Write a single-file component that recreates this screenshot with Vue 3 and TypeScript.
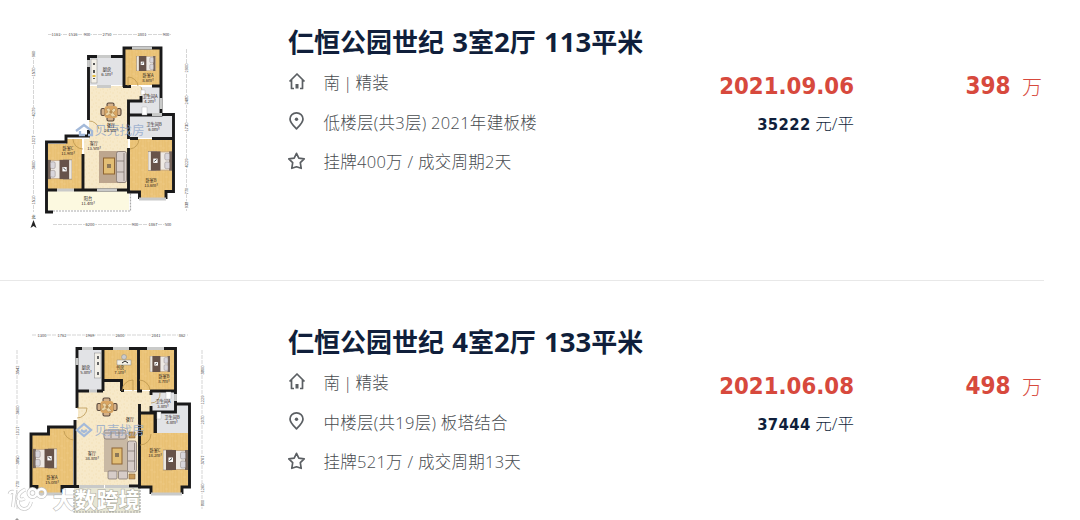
<script setup lang="ts">
interface Listing {
    id: number
    title: string
    facing: string
    floor: string
    deal: string
    date: string
    unitPrice: string
    total: string
}

interface Label {
    x: number
    y: number
    name: string
    area?: string
}

interface Tick {
    at: number
    text: string
}

const listings: Listing[] = [
    {
        id: 1,
        title: '仁恒公园世纪 3室2厅 113平米',
        facing: '南 | 精装',
        floor: '低楼层(共3层) 2021年建板楼',
        deal: '挂牌400万 / 成交周期2天',
        date: '2021.09.06',
        unitPrice: '35222',
        total: '398',
    },
    {
        id: 2,
        title: '仁恒公园世纪 4室2厅 133平米',
        facing: '南 | 精装',
        floor: '中楼层(共19层) 板塔结合',
        deal: '挂牌521万 / 成交周期13天',
        date: '2021.06.08',
        unitPrice: '37444',
        total: '498',
    },
];

// digits are set slightly larger than the Chinese characters around them
function runs(title: string): string[] {
    return title.split(/(\d+)/);
}

const labelsA: Label[] = [
    { x: 107, y: 71, name: '厨房', area: '6.1m²' },
    { x: 148, y: 77, name: '卧室A', area: '8.6m²' },
    { x: 150, y: 98, name: '卫生间A', area: '4.2m²' },
    { x: 154, y: 126, name: '卫生间B', area: '6.0m²' },
    { x: 111, y: 127, name: '餐厅', area: '24.5m²' },
    { x: 94, y: 145, name: '客厅', area: '13.5m²' },
    { x: 68, y: 150, name: '卧室C', area: '11.9m²' },
    { x: 151, y: 182, name: '卧室B', area: '13.6m²' },
    { x: 88, y: 200, name: '阳台', area: '11.4m²' },
];
const labelsB: Label[] = [
    { x: 86, y: 369, name: '厨房', area: '5.8m²' },
    { x: 120, y: 369, name: '书房', area: '7.1m²' },
    { x: 164, y: 378, name: '卧室B', area: '8.7m²' },
    { x: 163, y: 403, name: '卫生间A', area: '3.8m²' },
    { x: 172, y: 419, name: '卫生间B', area: '4.8m²' },
    { x: 130, y: 421, name: '餐厅' },
    { x: 92, y: 455, name: '客厅', area: '38.8m²' },
    { x: 52, y: 479, name: '卧室A', area: '15.0m²' },
    { x: 155, y: 452, name: '卧室C', area: '18.2m²' },
    { x: 107, y: 497, name: '阳台', area: '8.6m²' },
];

const topA: Tick[] = [
    { at: 56, text: '1163' }, { at: 73, text: '1536' }, { at: 87, text: '900' },
    { at: 107, text: '2750' }, { at: 142, text: '3801' }, { at: 166, text: '900' },
];
const bottomA: Tick[] = [
    { at: 90, text: '6200' }, { at: 135, text: '900' }, { at: 153, text: '1867' }, { at: 168, text: '500' },
];
const leftA: Tick[] = [
    { at: 54, text: '960' }, { at: 72, text: '1570' }, { at: 112, text: '4279' },
    { at: 140, text: '1027' }, { at: 165, text: '3600' }, { at: 200, text: '1510' },
];
const rightA: Tick[] = [
    { at: 68, text: '2900' }, { at: 100, text: '2480' }, { at: 127, text: '1730' },
    { at: 163, text: '4229' }, { at: 191, text: '770' }, { at: 205, text: '938' },
];
const topB: Tick[] = [
    { at: 42, text: '1300' }, { at: 62, text: '1762' }, { at: 90, text: '1969' },
    { at: 120, text: '2600' }, { at: 156, text: '2841' }, { at: 182, text: '862' },
];
const leftB: Tick[] = [
    { at: 370, text: '3542' }, { at: 410, text: '3600' }, { at: 431, text: '1017' },
    { at: 460, text: '3850' }, { at: 484, text: '770' },
];
const rightB: Tick[] = [
    { at: 370, text: '3800' }, { at: 400, text: '1229' }, { at: 420, text: '2070' },
    { at: 460, text: '3767' }, { at: 488, text: '1260' }, { at: 503, text: '800' },
];
</script>

<template>
    <svg class="defs" width="0" height="0" aria-hidden="true">
        <defs>
            <pattern id="wood" width="9" height="12" patternUnits="userSpaceOnUse">
                <rect width="9" height="12" fill="#ebc47a" />
                <path d="M0 0V12M3 0V12M6 0V12" stroke="#e5b965" stroke-width=".5" />
                <path d="M0 4H3M3 9H6M6 2H9" stroke="#f0cd88" stroke-width=".6" />
            </pattern>
            <pattern id="stone" width="7" height="7" patternUnits="userSpaceOnUse">
                <rect width="7" height="7" fill="#f7e9c9" />
                <path d="M0 2h2M4 5h2M5 1h1M2 6h1" stroke="#f4e2ba" />
            </pattern>
            <symbol id="bed" viewBox="0 0 25 20">
                <rect width="25" height="20" fill="#c9ab83" />
                <rect x="1" y="1" width="24" height="18" fill="#eee9e4" />
                <rect x="22" y="0" width="3" height="20" fill="#77665c" />
                <rect x="17.500" y="2" width="5" height="7" rx="1.500" fill="#d8d5db" stroke="#8b817e" stroke-width=".5" />
                <rect x="17.500" y="11" width="5" height="7" rx="1.500" fill="#d8d5db" stroke="#8b817e" stroke-width=".5" />
                <rect x="0" y="0" width="9" height="20" fill="#ece7df" stroke="#826f5e" stroke-width=".5" />
                <rect x="3" y="0" width="10" height="20" fill="#67534a" />
                <rect x="5.500" y="7.500" width="4.500" height="4.500" fill="#fff" />
                <path d="m6.500 10.500 2.500-2" stroke="#333" />
            </symbol>
            <symbol id="dining" viewBox="0 0 22 20">
                <g fill="#d3b089" stroke="#58473c" stroke-width="1.100">
                    <rect x="7" y="1" width="7" height="4" rx="1.500" />
                    <rect x="7" y="15" width="7" height="4" rx="1.500" />
                    <rect x="1" y="6.500" width="4" height="7" rx="1.500" />
                    <rect x="17" y="6.500" width="4" height="7" rx="1.500" />
                </g>
                <rect x="4.500" y="4" width="13" height="12" rx="3" fill="#d9a562" />
                <path d="m6 7 3-1 2 3 3-3 2 2-3 3 3 3-4 1-2-3-3 2-2-2 3-2z" fill="#ead5a7" stroke="#b58b56" stroke-width=".6" />
                <circle cx="11" cy="10" r="1.700" fill="#b58b50" />
            </symbol>
        </defs>
    </svg>
    <main class="records">
        <article v-for="item in listings" :key="item.id" class="record">
            <div class="plan">
                <svg v-if="item.id === 1" class="drawing" width="215" height="240" viewBox="0 0 215 240">
                    <g class="dims">
                        <path d="M48 34.500H171M53 224.500H171M33.500 50V212M186.500 49V211" />
                        <text v-for="t in topA" :key="'t' + t.at" :x="t.at" y="36">{{ t.text }}</text>
                        <text v-for="t in bottomA" :key="'b' + t.at" :x="t.at" y="226">{{ t.text }}</text>
                        <text v-for="t in leftA" :key="'l' + t.at" :transform="`translate(35 ${t.at}) rotate(-90)`">{{ t.text }}</text>
                        <text v-for="t in rightA" :key="'r' + t.at" :transform="`translate(188 ${t.at}) rotate(-90)`">{{ t.text }}</text>
                    </g>
                    <text x="33.500" y="219" class="tiny">北</text>
                    <path d="m33.500 220 3 8-3-2-3 2z" fill="#222" />
                    <path d="M89 86H141V101H128V189H84V139H89Z" fill="url(#stone)" />
                    <path d="M90 57H123V85H90Z" class="tile" />
                    <path d="M141 87H160V114H130V101H141ZM130 116H172V138H130Z" class="tile" />
                    <path d="M125 49H160V85H125ZM48 144H66V139H82V189H48ZM130 139H172V191H166V199H139V191H130Z" fill="url(#wood)" />
                    <path d="M48 191H129V210H48Z" class="balcony" />
                    <path d="M53 211H130.500V190" class="dashes" />
                    <path d="M88.500 120V56.500H124M124 87V48H161V86H152M123 86.500H131M161 86V115H128.500V101H141V96M128.500 115V139M162 114.500H173.500V191.500H166V199M139.500 199V192H128.500V148M130 138.500H138M152 138.500H173M88.500 130V136H66V142H46.500V212H53M46 190H57M74 190H129M83 154V190" class="wall" />
                    <path d="M97 56.500H111M132 48H152M161 98V109M139 199H166M97 86.500H111M57 190H74M97 190H117M88.500 60V67M152 114.500H162" class="opening" />
                    <path d="M128 86V77A10 10 0 0 1 138 86M73 139A10 10 0 0 0 83 149M130 149A10 10 0 0 0 139 139M141 87A9 9 0 0 0 149 95M89 121A10 10 0 0 1 99 129" class="door" />
                    <rect x="91" y="59" width="6" height="24" fill="#f4f1e9" stroke="#888" stroke-width=".5" />
                    <path d="M94 63V65M94 70V73M94 78V79" stroke="#555" stroke-width="2" />
                    <path d="M92.500 75h3v2h-3z" fill="#e5bd42" />
                    <use href="#bed" x="133" y="56" width="26" height="15" preserveAspectRatio="none" />
                    <use href="#bed" x="148" y="150" width="24" height="22" preserveAspectRatio="none" />
                    <use href="#bed" transform="translate(72 159) scale(-1 1)" width="24" height="21" preserveAspectRatio="none" />
                    <use href="#dining" x="100" y="102" width="22" height="20" />
                    <rect x="99" y="151" width="26" height="32" fill="#bda68e" />
                    <rect x="103.500" y="158" width="11" height="16" fill="#e2be75" stroke="#8e6533" />
                    <path d="M107 164h4v4h-4z" fill="#8b7759" />
                    <g class="sofa">
                        <rect x="116.500" y="151.500" width="10" height="31" rx="2" />
                        <path d="M117 161h7M117 172h7M124 153v28" />
                    </g>
                    <path d="M142 107h5v8h-5zM141 90h4v5h-4z" fill="#fff" stroke="#aaa" stroke-width=".4" />
                    <g class="brand">
                        <path d="m76 131 8-6 8 6v4h-4M80 131v4h5" />
                        <text x="94.500" y="135">贝壳找房</text>
                    </g>
                    <g v-for="l in labelsA" :key="l.name" class="room">
                        <text :x="l.x" :y="l.y">{{ l.name }}</text>
                        <text :x="l.x" :y="l.y + 5">{{ l.area }}</text>
                    </g>
                </svg>
                <svg v-else class="drawing" width="215" height="220" viewBox="0 300 215 220">
                    <g class="dims">
                        <path d="M32 335H188M17 350V510M202 350V510" />
                        <text v-for="t in topB" :key="'t' + t.at" :x="t.at" y="336.500">{{ t.text }}</text>
                        <text v-for="t in leftB" :key="'l' + t.at" :transform="`translate(18.500 ${t.at}) rotate(-90)`">{{ t.text }}</text>
                        <text v-for="t in rightB" :key="'r' + t.at" :transform="`translate(203.500 ${t.at}) rotate(-90)`">{{ t.text }}</text>
                    </g>
                    <path d="m17 518 4 4h-8z" fill="#999" />
                    <path d="M78 391H103V381H121V391H151V412H138V485H75V420H78Z" fill="url(#stone)" />
                    <path d="M78 350H102V391H78ZM151 391H174V411H151ZM156 413V404H188V433H156Z" class="tile" />
                    <path d="M104 350H137V390H121V380H104ZM139 350H174V390H139ZM140 413H155V433H188V487H182V494H151V486H140ZM32 435H49V428H73V486H63V494H37V486H32Z" fill="url(#wood)" />
                    <path d="M74 488H140V513H74Z" class="balcony shaded" />
                    <path d="M74 490V512H140V488" class="dashes" />
                    <path d="M77 408V348.500H175.500V412H151M103 348V391M138.500 348V391H142M121.500 391V380.500H103M78 391H89M97 391H103M121 390.500H124M150 391H175M151 391V395M151 406V412M175 404H189.500V487H182V494M151 494V487H139.500V404M140 413H155.500V433M155 413V433M140 433H143M75 420V487M75 427H48.500V434H31V486.500H37V494M62 494V486.500H79M129 486H140" class="wall" />
                    <path d="M82 348.500H93M113 348.500H129M147 348.500H164M77 358V365M37 494H62M151 494H182M79 486.500H104M105 486.500H129M175.500 394V401M89 391H97" class="opening" />
                    <path d="M122 391A11 11 0 0 1 133 380V391M139 380A11 11 0 0 1 150 390M77 408H87A10 10 0 0 1 77 418M64 431A10 10 0 0 0 74 440M140 445A11 11 0 0 0 151 434M151 403A9 9 0 0 0 160 393" class="door" />
                    <rect x="94.500" y="353" width="6.500" height="25" fill="#f4f1e9" stroke="#888" stroke-width=".5" />
                    <path d="M98 356v3M98 362v3M98 372v3" stroke="#666" stroke-width="2" />
                    <rect x="117" y="360" width="14" height="5" fill="#f4f1e6" stroke="#888" stroke-width=".5" />
                    <circle cx="124" cy="357" r="2.500" fill="#ccc" stroke="#888" stroke-width=".5" />
                    <path d="m122 363 3-2 3 2" fill="none" stroke="#222" />
                    <use href="#bed" x="147" y="356" width="26" height="16" preserveAspectRatio="none" />
                    <use href="#bed" x="163" y="449" width="25" height="22" preserveAspectRatio="none" />
                    <use href="#bed" transform="translate(57 448) scale(-1 1)" width="24" height="21" preserveAspectRatio="none" />
                    <use href="#dining" x="96" y="397" width="22" height="20" />
                    <rect x="104" y="435" width="24" height="37" fill="#c9b9a4" />
                    <rect x="112" y="448" width="10" height="16" fill="#e2be75" stroke="#8e6533" />
                    <path d="M115 453h4v4h-4z" fill="#8b7759" />
                    <g class="sofa">
                        <rect x="104" y="430" width="22" height="9" rx="2" />
                        <path d="M111 431v7M119 431v7M105 433h20" />
                        <rect x="127.500" y="441" width="9" height="31" rx="2" />
                        <path d="M128 451h7M128 461h7M134.500 443v27" />
                        <rect x="108" y="471" width="9" height="8" rx="1" />
                        <rect x="118.500" y="471" width="9" height="8" rx="1" />
                    </g>
                    <path d="M129 432h6v6h-6zM129 474h6v5h-6z" fill="#c79a59" stroke="#755735" stroke-width=".5" />
                    <path d="M166 392h5v7h-5zM157 412h4v7h-4z" fill="#fff" stroke="#aaa" stroke-width=".4" />
                    <g class="brand">
                        <path d="m77 430 7-6 7 6-7 6zM81 430l3 2 3-2" />
                        <text x="94.500" y="435">贝壳找房</text>
                    </g>
                    <g v-for="l in labelsB" :key="l.name" class="room">
                        <text :x="l.x" :y="l.y">{{ l.name }}</text>
                        <text :x="l.x" :y="l.y + 5">{{ l.area }}</text>
                    </g>
                    <g class="stamp">
                        <g v-for="layer in ['mark-edge', 'mark']" :key="layer" :class="layer">
                            <path d="M9.500 494c1-3 5-3 5 0l-1.500 13M15 490v4" />
                            <path d="M25.500 489.500c-3 1-7 4-7 7s3 4 6 2" />
                            <path d="M18 500c-1 11 11 12 13 2" />
                            <circle cx="32.500" cy="493" r="4" />
                            <circle cx="41.500" cy="493" r="4" />
                        </g>
                        <text x="53" y="508" textLength="87">大数跨境</text>
                    </g>
                </svg>
            </div>
            <div class="info">
                <h2>
                    <span v-for="(run, i) in runs(item.title)" :key="i" :class="{ digits: i % 2 === 1 }">{{ run }}</span>
                </h2>
                <ul>
                    <li>
                        <svg class="icon" width="18" height="20" viewBox="0 0 18 20">
                            <path d="M1.500 9.500 9 2l7.500 7.500M3.500 8v8.500h2.500M14.500 8v8.500h-2.500" />
                            <path d="M7.500 12h3v4.500h-3z" class="solid" />
                        </svg>
                        <span class="facing">{{ item.facing }}</span>
                    </li>
                    <li>
                        <svg class="icon" width="18" height="20" viewBox="0 0 18 20">
                            <path d="M8.500 16.800C5 13.300 2 10.800 2 7.100a6.500 6.200 0 0 1 13 0c0 3.700-3 6.200-6.500 9.700z" />
                            <circle cx="8.500" cy="7.200" r="1.700" class="solid" />
                        </svg>
                        <span>{{ item.floor }}</span>
                    </li>
                    <li>
                        <svg class="icon" width="18" height="20" viewBox="0 0 18 20">
                            <path d="m8.500 2.300 2.300 4.800 5.400.8-3.900 3.800.9 5.600-4.700-1.500-4.700 1.500.9-5.600L.8 7.900l5.400-.8z" />
                        </svg>
                        <span>{{ item.deal }}</span>
                    </li>
                </ul>
            </div>
            <div class="deal">
                <div class="date">{{ item.date }}</div>
                <div class="unit"><b>{{ item.unitPrice }}</b> 元/平</div>
            </div>
            <div class="total"><b>{{ item.total }}</b><span>万</span></div>
        </article>
    </main>
</template>

<style>
body {
    margin: 0;
    background: #fff;
    overflow: hidden;
}
</style>

<style scoped>
.defs {
    display: block;
}

.records {
    width: 1044px;
    height: 520px;
    overflow: hidden;
    font-family: 'Open Sans', 'Noto Sans CJK SC', sans-serif;
    color: #101f3b;
}

.record {
    display: flex;
    box-sizing: border-box;
    height: 281px;
    border-bottom: 1px solid #e8e8e8;
}

.record + .record {
    height: 300px;
    padding-top: 19px;
    border-bottom: 0;
}

.plan {
    width: 288px;
    flex: none;
}

.drawing {
    display: block;
    font-family: 'Noto Sans CJK SC', sans-serif;
}

.info {
    width: 412px;
    flex: none;
    padding-top: 23px;
}

h2 {
    margin: 0;
    height: 38px;
    font-size: 26px;
    line-height: 38px;
    font-weight: 700;
    word-spacing: 1.500px;
    white-space: nowrap;
}

.digits {
    font-size: 27.500px;
    line-height: 1;
}

ul {
    list-style: none;
    margin: 1.500px 0 0;
    padding: 0;
}

li {
    display: flex;
    align-items: center;
    height: 39.500px;
    color: #484c50;
    font-size: 16.500px;
    font-weight: 300;
    letter-spacing: .27px;
    white-space: nowrap;
}

.facing {
    word-spacing: -1.600px;
}

.icon {
    margin-right: 17.500px;
    fill: none;
    stroke: #5b5f63;
    stroke-width: 1.700;
    stroke-linejoin: round;
}

.icon .solid {
    fill: #5b5f63;
    stroke: none;
}

.deal {
    width: 154px;
    flex: none;
    padding-top: 70px;
    text-align: right;
}

.date {
    font-family: 'DejaVu Sans Condensed', 'DejaVu Sans', sans-serif;
    font-stretch: condensed;
    font-weight: 700;
    font-size: 23.700px;
    line-height: 32px;
    color: #d7493d;
}

.unit {
    margin-top: 10px;
    font-size: 16.500px;
    line-height: 24px;
    font-weight: 300;
}

.unit b {
    margin-right: .5px;
    font-family: 'DejaVu Sans Condensed', 'DejaVu Sans', sans-serif;
    font-stretch: condensed;
    font-weight: 700;
    font-size: 16.500px;
    letter-spacing: .35px;
}

.total {
    display: flex;
    flex: 1;
    justify-content: flex-end;
    align-items: baseline;
    padding: 70px 2px 0 0;
    height: 32px;
    line-height: 33px;
    color: #d7493d;
}

.total b {
    font-family: 'DejaVu Sans Condensed', 'DejaVu Sans', sans-serif;
    font-stretch: condensed;
    font-size: 24px;
}

.total span {
    position: relative;
    top: 1px;
    margin-left: 11.500px;
    font-size: 20px;
    font-weight: 300;
}

.dims path {
    fill: none;
    stroke: #bbb;
    stroke-width: .6;
    stroke-dasharray: 4 1;
}

.dims text {
    font-size: 4px;
    fill: #444;
    text-anchor: middle;
    paint-order: stroke;
    stroke: #fff;
    stroke-width: 1.500;
}

.tiny {
    font-size: 4px;
    text-anchor: middle;
}

.tile {
    fill: #e2e3e6;
}

.balcony {
    fill: #fcf9e0;
}

.shaded {
    fill: #e6e5d3;
}

.dashes {
    fill: none;
    stroke: #aaa;
    stroke-width: 1.200;
    stroke-dasharray: 2 1;
}

.wall {
    fill: none;
    stroke: #19191a;
    stroke-width: 2.900;
}

.opening {
    fill: none;
    stroke: #c9cac9;
    stroke-width: 2.900;
}

.door {
    fill: none;
    stroke: #b58f48;
    stroke-width: .7;
}

.sofa {
    fill: #d6ccc8;
    stroke: #776b65;
    stroke-width: .7;
}

.room text {
    font-size: 4.200px;
    fill: #282018;
    text-anchor: middle;
}

.brand path {
    fill: none;
    stroke: #a3b9d9;
    stroke-width: 2.300;
}

.brand text {
    font-size: 12.500px;
    fill: #8fa6ca;
    fill-opacity: .8;
}

.stamp text {
    font-size: 21.500px;
    font-weight: 700;
    fill: #fff;
    stroke: rgba(120, 120, 115, .45);
    stroke-width: 1.400;
    paint-order: stroke;
}

.mark-edge {
    fill: none;
    stroke: #c4c4c4;
    stroke-width: 3.800;
}

.mark {
    fill: none;
    stroke: #fff;
    stroke-width: 2.500;
}
</style>
